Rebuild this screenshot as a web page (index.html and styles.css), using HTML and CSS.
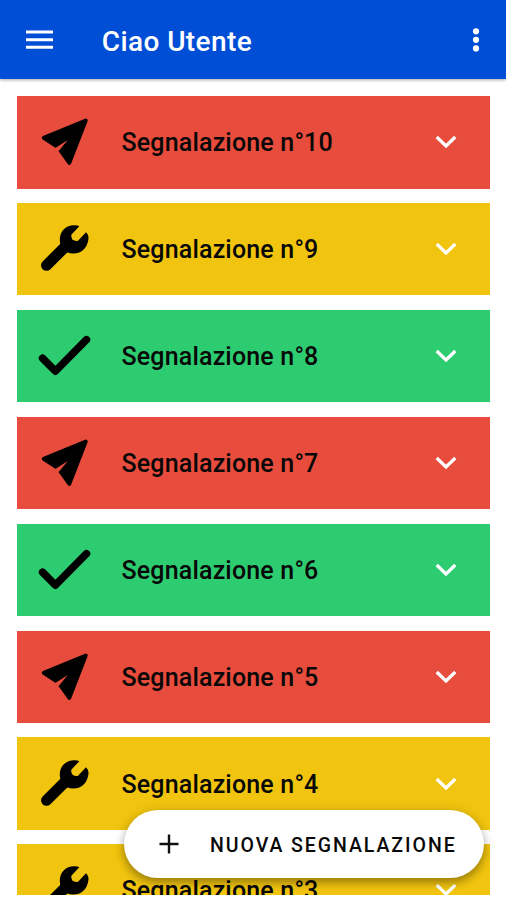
FILE: index.html
```html
<!DOCTYPE html>
<html lang="it">
<head>
<meta charset="utf-8">
<title>Segnalazioni</title>
<link rel="stylesheet" href="styles.css">
</head>
<body>
<svg class="defs" aria-hidden="true">
  <symbol id="send" viewBox="0 0 60 60"><path d="M50.8 8.5 L8.7 25.8 L21 34 L33 27.5 L25 38 L34.3 51 Z" fill="#000" stroke="#000" stroke-width="3.8" stroke-linejoin="round"/><path d="M19.5 36.5 L32.8 28 L23.7 39" fill="#e74c3c"/></symbol>
  <symbol id="wrench" viewBox="0 0 60 60"><path d="M11.5 46.3 L31 27" fill="none" stroke="#000" stroke-width="11" stroke-linecap="round"/><path d="M44.3 7.2 L36.3 15.8 Q35.5 22.5 42.8 22 L51 13.2 Q54.5 16.5 53.2 21.5 C51.5 30.5 45 34.8 38 34.5 C30 34.4 24.8 28.4 24.8 20.7 C24.8 12 31 6.2 39 6.2 Q42.8 6.1 44.3 7.2Z" fill="#000"/></symbol>
  <symbol id="check" viewBox="0 0 60 60"><path d="M7.6 32.3 L20.4 45.1 L51.5 13.7" fill="none" stroke="#000" stroke-width="7.6" stroke-linecap="round" stroke-linejoin="round"/></symbol>
  <symbol id="chevron" viewBox="0 0 22 14"><path d="M1.7 2 L11 11 L20.3 2" fill="none" stroke="#fff" stroke-width="3.2"/></symbol>
</svg>
<header class="bar">
  <svg class="menu" viewBox="0 0 27 20"><path d="M0 2H27M0 9.7H27M0 17.3H27" stroke="#fff" stroke-width="3"/></svg>
  <h1 class="title">Ciao Utente</h1>
  <svg class="more" viewBox="0 0 8 26" fill="#fff"><circle cx="4" cy="4.3" r="3.1"/><circle cx="4" cy="12.8" r="3.1"/><circle cx="4" cy="21.4" r="3.1"/></svg>
</header>
<main class="list">
  <article class="card red"><svg class="icon"><use href="#send"/></svg><span class="label">Segnalazione n°10</span><svg class="chevron"><use href="#chevron"/></svg></article>
  <article class="card yellow"><svg class="icon"><use href="#wrench"/></svg><span class="label">Segnalazione n°9</span><svg class="chevron"><use href="#chevron"/></svg></article>
  <article class="card green"><svg class="icon"><use href="#check"/></svg><span class="label">Segnalazione n°8</span><svg class="chevron"><use href="#chevron"/></svg></article>
  <article class="card red"><svg class="icon"><use href="#send"/></svg><span class="label">Segnalazione n°7</span><svg class="chevron"><use href="#chevron"/></svg></article>
  <article class="card green"><svg class="icon"><use href="#check"/></svg><span class="label">Segnalazione n°6</span><svg class="chevron"><use href="#chevron"/></svg></article>
  <article class="card red"><svg class="icon"><use href="#send"/></svg><span class="label">Segnalazione n°5</span><svg class="chevron"><use href="#chevron"/></svg></article>
  <article class="card yellow"><svg class="icon"><use href="#wrench"/></svg><span class="label">Segnalazione n°4</span><svg class="chevron"><use href="#chevron"/></svg></article>
  <article class="card yellow"><svg class="icon"><use href="#wrench"/></svg><span class="label">Segnalazione n°3</span><svg class="chevron"><use href="#chevron"/></svg></article>
</main>
<button class="fab"><svg class="plus" viewBox="0 0 20 20"><path d="M10 .5V19.5M.5 10H19.5" stroke="#111" stroke-width="2.4"/></svg><span class="fab-label">NUOVA SEGNALAZIONE</span></button>
</body>
</html>
```
FILE: styles.css
```css
* { box-sizing: border-box; }
body {
  margin: 0;
  height: 900px;
  overflow: hidden;
  background: #fff;
  font-family: Roboto, "Liberation Sans", sans-serif;
  display: flex;
  flex-direction: column;
}
.defs { position: absolute; width: 0; height: 0; }
.bar {
  height: 79px;
  flex: none;
  display: flex;
  align-items: center;
  padding: 1px 26px 0 26px;
  background: #004dd6;
  box-shadow: 0 1px 3px rgba(0, 0, 0, .35);
}
.menu { width: 27px; height: 20px; }
.title {
  flex: 1;
  margin: 4px 0 0 48.8px;
  color: #fff;
  font-size: 28px;
  font-weight: 500;
  line-height: 32px;
  letter-spacing: .4px;
}
.more { width: 8px; height: 26px; }
.list {
  height: 816px;
  flex: none;
  overflow: hidden;
  padding: 17.3px 16px 0 17px;
  display: flex;
  flex-direction: column;
  gap: 14.5px;
}
.card {
  height: 92.35px;
  flex: none;
  display: flex;
  align-items: center;
  padding: 0 33px 0 18px;
}
.red { background: #e74c3c; }
.yellow { background: #f1c40f; }
.green { background: #2ecc71; }
.icon { width: 60px; height: 60px; flex: none; }
.label {
  flex: 1;
  margin-left: 26.5px;
  padding-top: 2px;
  color: #080808;
  font-size: 25px;
  font-weight: 500;
  line-height: 30px;
  letter-spacing: .17px;
  white-space: nowrap;
}
.chevron { width: 22px; height: 14px; flex: none; }
.fab {
  position: absolute;
  left: 124px;
  top: 810px;
  width: 360px;
  height: 68px;
  padding: 0 0 0 35px;
  border: 0;
  border-radius: 34px;
  background: #fff;
  color: #080808;
  display: flex;
  align-items: center;
  font-family: inherit;
  box-shadow: 0 5px 8px rgba(0, 0, 0, .28), 0 1px 12px rgba(0, 0, 0, .14);
}
.plus { width: 20px; height: 20px; }
.fab-label {
  margin: 3px 0 0 31px;
  font-size: 19.5px;
  font-weight: 500;
  line-height: 24px;
  letter-spacing: 1.94px;
  white-space: nowrap;
}
```
